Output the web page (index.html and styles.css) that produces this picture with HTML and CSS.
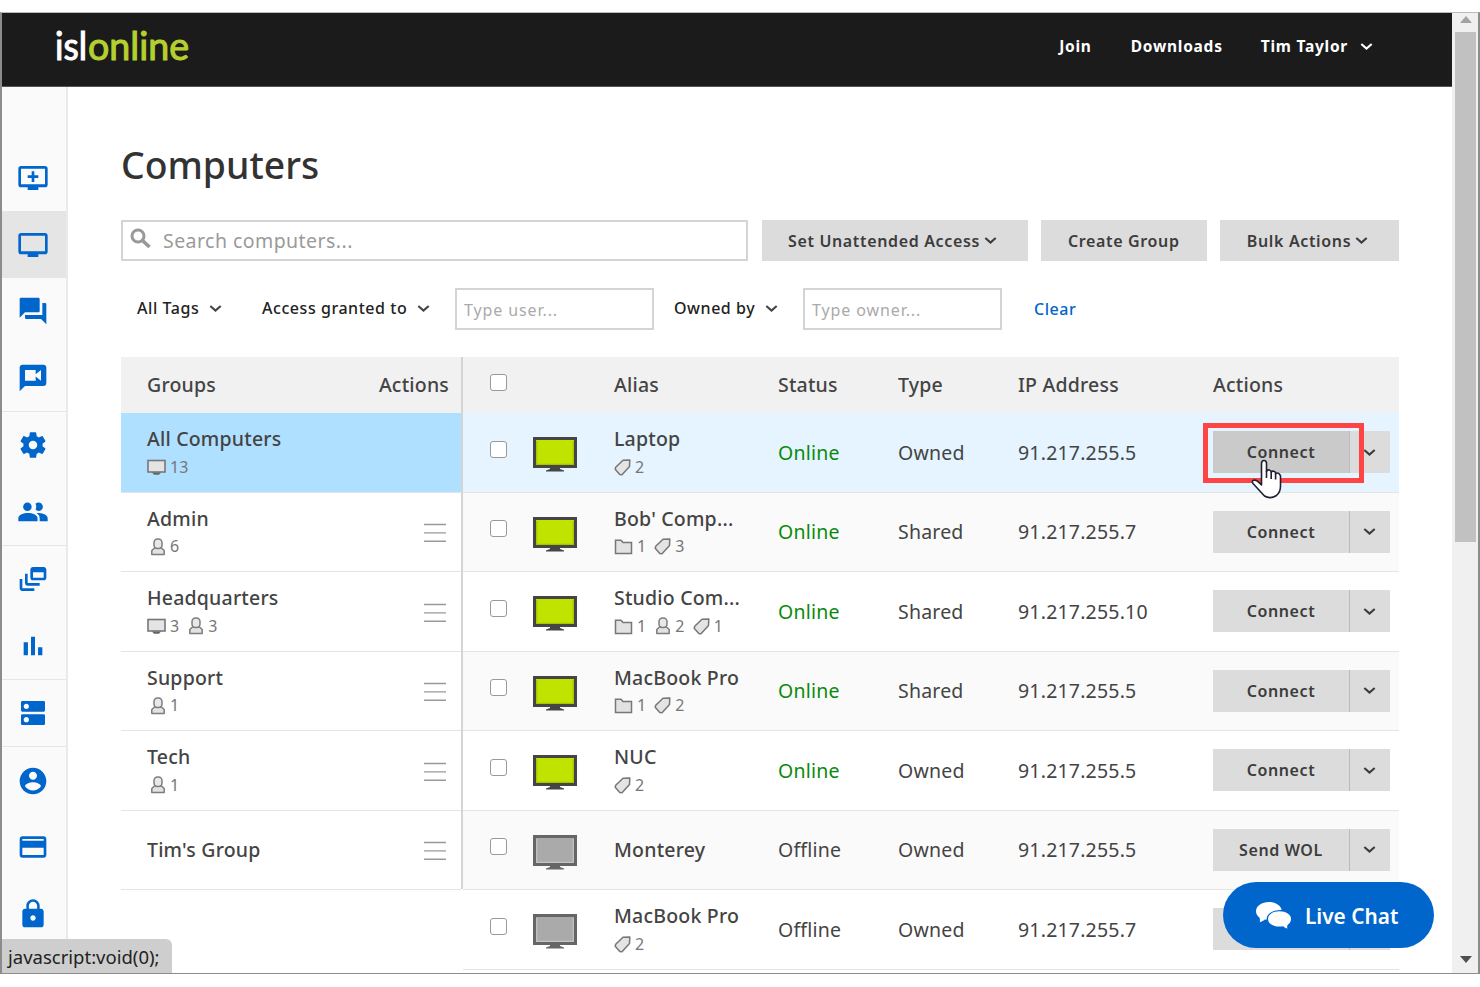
FILE: index.html
```html
<!DOCTYPE html>
<html lang="en">
<head>
<meta charset="utf-8">
<title>Computers</title>
<link rel="stylesheet" href="styles.css">
</head>
<body>
<svg class="defs" width="0" height="0" aria-hidden="true">
  <defs>
    <symbol id="chev" viewBox="0 0 13 9"><path d="M1.3 2 L6.5 6.600 L11.700 2" fill="none" stroke="currentColor" stroke-width="2.100"/></symbol>
    <symbol id="pc" viewBox="0 0 44 36">
      <path d="M17 30h10v2l4 1.600v1H13v-1l4-1.600z" fill="currentColor"/>
      <rect x="0" y="0" width="44" height="31" fill="currentColor"/>
      <rect class="screen" x="3" y="3" width="38" height="25"/>
      <path d="M3.700 4V27.400H40.300V4" fill="none" class="glow" stroke-width="1.200"/>
    </symbol>
    <symbol id="mini-pc" viewBox="0 0 19 16"><rect x="1" y="1.500" width="17" height="11.500" fill="#e4e4e4" stroke="#777" stroke-width="1.600"/><path d="M5 13.500h9l-2 2.300H7z" fill="#666"/></symbol>
    <symbol id="user" viewBox="0 0 16 18"><path d="M4.500 10L1.800 12.500V16.600H14.200V12.500L11.500 10Z" fill="#e2e2e2" stroke="#7d7d7d" stroke-width="1.500" stroke-linejoin="round"/><rect x="4" y="1" width="8" height="9.400" rx="3.500" fill="#e8e8e8" stroke="#7d7d7d" stroke-width="1.500"/></symbol>
    <symbol id="tag" viewBox="0 0 17 17"><path d="M9 1.200L15.800 1 15.500 7.500 8 15.800 5.800 15.600 1.200 10.200 1.700 8.200Z" fill="#e4e4e4" stroke="#777" stroke-width="1.500" stroke-linejoin="round"/></symbol>
    <symbol id="folder" viewBox="0 0 19 17"><path d="M1.500 15.500V2.200H7L9 4.600H17.500V15.500Z" fill="#e2e2e2" stroke="#777" stroke-width="1.500"/></symbol>
    <symbol id="burger" viewBox="0 0 22 20"><path d="M0 1.500H22M0 9.900H22M0 18.200H22" stroke="#999" stroke-width="1.400"/></symbol>
  </defs>
</svg>
<div class="window">
  <div class="main">
    <header class="top">
      <svg class="logo" width="150" height="58" viewBox="0 0 150 58"><text class="isl" x="0" y="47" textLength="32" lengthAdjust="spacingAndGlyphs">isl</text><text class="online" x="33" y="47" textLength="101" lengthAdjust="spacingAndGlyphs">online</text></svg>
      <nav class="links"><a class="l-join">Join</a><a class="l-down">Downloads</a><a class="l-user">Tim Taylor</a><svg class="chev"><use href="#chev"/></svg></nav>
    </header>
    <div class="body">
      <aside class="side">
        <section>
          <a><svg viewBox="0 0 24 24"><path d="M21 3H3c-1.110 0-2 .89-2 2v12c0 1.100.89 2 2 2h5v2h8v-2h5c1.100 0 1.990-.9 1.990-2L23 5c0-1.110-.9-2-2-2zm0 13.600H3V5h18v11.600zm-5-6.600v2h-3v3h-2v-3H8v-2h3V7h2v3h3z"/></svg></a>
          <a class="active"><svg viewBox="0 0 24 24"><path d="M21 3H3c-1.110 0-2 .89-2 2v12c0 1.100.89 2 2 2h5v2h8v-2h5c1.100 0 1.990-.9 1.990-2L23 5c0-1.110-.9-2-2-2zm0 13.600H3V5h18v11.600z"/></svg></a>
          <a><svg viewBox="0 0 24 24"><path d="M21 6h-2v9H6v2c0 .55.45 1 1 1h11l4 4V7c0-.55-.45-1-1-1zm-4 6V3c0-.55-.45-1-1-1H3c-.55 0-1 .45-1 1v14l4-4h10c.55 0 1-.45 1-1z"/></svg></a>
          <a><svg viewBox="0 0 24 24"><path d="M20 2H4c-1.100 0-1.990.9-1.990 2L2 22l4-4h14c1.100 0 2-.9 2-2V4c0-1.100-.9-2-2-2zm-2 12l-4-3.200V14H6V6h8v3.200L18 6v8z"/></svg></a>
        </section>
        <section>
          <a><svg viewBox="0 0 24 24"><path d="M19.140 12.940c.04-.3.060-.61.060-.94 0-.32-.02-.64-.07-.94l2.030-1.580c.18-.14.230-.41.120-.61l-1.920-3.320c-.12-.22-.37-.29-.59-.22l-2.390.96c-.5-.38-1.030-.7-1.620-.94l-.36-2.540c-.04-.24-.24-.41-.48-.41h-3.840c-.24 0-.43.170-.47.410l-.36 2.540c-.59.240-1.130.570-1.620.940l-2.390-.96c-.22-.08-.47 0-.59.220L2.740 8.870c-.12.210-.08.470.120.610l2.030 1.580c-.05.300-.09.630-.09.940s.02.640.070.940l-2.030 1.580c-.18.140-.23.410-.12.610l1.920 3.320c.12.220.370.290.590.220l2.390-.96c.5.380 1.030.7 1.620.94l.36 2.540c.05.240.240.410.480.410h3.840c.24 0 .44-.17.470-.41l.36-2.540c.59-.24 1.130-.56 1.620-.94l2.390.96c.22.080.470 0 .59-.22l1.920-3.320c.12-.22.070-.47-.12-.61l-2.010-1.580zM12 15.200c-1.770 0-3.200-1.430-3.200-3.200s1.430-3.200 3.200-3.200 3.200 1.430 3.200 3.200-1.430 3.200-3.200 3.200z"/></svg></a>
          <a><svg viewBox="0 0 24 24"><path d="M7.800 11.200a3.200 3.200 0 1 0 0-6.400 3.200 3.200 0 0 0 0 6.400zM16.200 11.200a3.200 3.200 0 1 0 0-6.400 3.200 3.200 0 0 0-2.300 1c.7 1.300.7 3.100 0 4.400a3.200 3.200 0 0 0 2.300 1zM1 19v-2.300c0-2.500 4-3.900 7.200-3.900s7.200 1.400 7.200 3.900V19zM17 19h6v-2.300c0-2.300-3.300-3.700-6.300-3.900-.9 0-1.600.1-2 .2 1.600.9 2.300 2.100 2.300 3.700z"/></svg></a>
        </section>
        <section>
          <a><svg viewBox="0 0 24 24"><path d="M8 8H6v7c0 1.100.89 2 2 2h9v-2H8V8zM20 3h-8c-1.100 0-2 .9-2 2v6c0 1.100.9 2 2 2h8c1.100 0 2-.9 2-2V5c0-1.100-.9-2-2-2zm0 8h-8V7h8v4zM4 12H2v7c0 1.100.89 2 2 2h9v-2H4v-7z"/></svg></a>
          <a><svg viewBox="0 0 24 24"><path d="M5 9.200h3.200V19H5zM10.500 5h3v14h-3zM15.800 13H19v6h-3.200z"/></svg></a>
        </section>
        <section>
          <a><svg viewBox="0 0 24 24"><path d="M20 13H4c-.55 0-1 .45-1 1v6c0 .55.45 1 1 1h16c.55 0 1-.45 1-1v-6c0-.55-.45-1-1-1zM7 19c-1.100 0-2-.9-2-2s.9-2 2-2 2 .9 2 2-.9 2-2 2zM20 3H4c-.55 0-1 .45-1 1v6c0 .55.45 1 1 1h16c.55 0 1-.45 1-1V4c0-.55-.45-1-1-1zM7 9c-1.100 0-2-.9-2-2s.9-2 2-2 2 .9 2 2-.9 2-2 2z"/></svg></a>
        </section>
        <section>
          <a><svg viewBox="0 0 24 24"><path d="M12 2C6.480 2 2 6.480 2 12s4.480 10 10 10 10-4.480 10-10S17.520 2 12 2zm0 3c1.660 0 3 1.340 3 3s-1.340 3-3 3-3-1.340-3-3 1.340-3 3-3zm0 14.200c-2.500 0-4.710-1.280-6-3.220.03-1.990 4-3.080 6-3.080 1.990 0 5.970 1.090 6 3.080-1.290 1.940-3.500 3.220-6 3.220z"/></svg></a>
          <a><svg viewBox="0 0 24 24"><path d="M20 4H4c-1.110 0-1.990.89-1.990 2L2 18c0 1.110.89 2 2 2h16c1.110 0 2-.89 2-2V6c0-1.110-.89-2-2-2zm0 14H4v-5.500h16V18zm0-10.600H4V6h16v1.400z"/></svg></a>
          <a><svg viewBox="0 0 24 24"><path d="M18 8h-1V6c0-2.760-2.240-5-5-5S7 3.240 7 6v2H6c-1.100 0-2 .9-2 2v10c0 1.100.9 2 2 2h12c1.100 0 2-.9 2-2V10c0-1.100-.9-2-2-2zm-6 9c-1.100 0-2-.9-2-2s.9-2 2-2 2 .9 2 2-.9 2-2 2zm3.100-9H8.900V6c0-1.710 1.390-3.100 3.100-3.100 1.710 0 3.100 1.390 3.100 3.100v2z"/></svg></a>
        </section>
      </aside>
      <main class="content">
        <h1>Computers</h1>
        <div class="toolbar">
          <div class="search"><svg width="22" height="22" viewBox="0 0 22 22"><circle cx="8" cy="8" r="6" fill="none" stroke="#999" stroke-width="3"/><path d="M12.500 12.500L19.500 19" stroke="#999" stroke-width="3.600"/></svg><span>Search computers...</span></div>
          <div class="btn b1">Set Unattended Access<svg class="chev"><use href="#chev"/></svg></div>
          <div class="btn b2">Create Group</div>
          <div class="btn b3">Bulk Actions<svg class="chev"><use href="#chev"/></svg></div>
        </div>
        <div class="filters">
          <div class="f f1">All Tags<svg class="chev"><use href="#chev"/></svg></div>
          <div class="f f2">Access granted to<svg class="chev"><use href="#chev"/></svg></div>
          <div class="input">Type user...</div>
          <div class="f f3">Owned by<svg class="chev"><use href="#chev"/></svg></div>
          <div class="input">Type owner...</div>
          <a class="clear">Clear</a>
        </div>
        <div class="tables">
          <div class="groups">
            <div class="ghead"><span>Groups</span><span>Actions</span></div>
            <div class="grow sel"><div><p>All Computers</p><p class="meta"><svg class="i-pc"><use href="#mini-pc"/></svg><b>13</b></p></div></div>
            <div class="grow"><div><p>Admin</p><p class="meta"><svg class="i-user first"><use href="#user"/></svg><b>6</b></p></div><svg class="burger"><use href="#burger"/></svg></div>
            <div class="grow"><div><p>Headquarters</p><p class="meta"><svg class="i-pc"><use href="#mini-pc"/></svg><b>3</b><svg class="i-user"><use href="#user"/></svg><b>3</b></p></div><svg class="burger"><use href="#burger"/></svg></div>
            <div class="grow"><div><p>Support</p><p class="meta"><svg class="i-user first"><use href="#user"/></svg><b>1</b></p></div><svg class="burger"><use href="#burger"/></svg></div>
            <div class="grow"><div><p>Tech</p><p class="meta"><svg class="i-user first"><use href="#user"/></svg><b>1</b></p></div><svg class="burger"><use href="#burger"/></svg></div>
            <div class="grow"><div><p>Tim's Group</p></div><svg class="burger"><use href="#burger"/></svg></div>
          </div>
          <div class="comps">
            <div class="chead"><i class="cb"></i><span></span><span>Alias</span><span>Status</span><span>Type</span><span>IP Address</span><span>Actions</span></div>
            <div class="crow hov"><i class="cb"></i><svg class="pc on"><use href="#pc"/></svg><div><p>Laptop</p><p class="meta"><svg class="i-tag"><use href="#tag"/></svg><b>2</b></p></div><span class="ok">Online</span><span>Owned</span><span>91.217.255.5</span><div class="act"><span>Connect</span><span><svg class="chev"><use href="#chev"/></svg></span></div></div>
            <div class="crow alt"><i class="cb"></i><svg class="pc on"><use href="#pc"/></svg><div><p>Bob' Comp...</p><p class="meta"><svg class="i-folder"><use href="#folder"/></svg><b>1</b><svg class="i-tag"><use href="#tag"/></svg><b>3</b></p></div><span class="ok">Online</span><span>Shared</span><span>91.217.255.7</span><div class="act"><span>Connect</span><span><svg class="chev"><use href="#chev"/></svg></span></div></div>
            <div class="crow"><i class="cb"></i><svg class="pc on"><use href="#pc"/></svg><div><p>Studio Com...</p><p class="meta"><svg class="i-folder"><use href="#folder"/></svg><b>1</b><svg class="i-user"><use href="#user"/></svg><b>2</b><svg class="i-tag"><use href="#tag"/></svg><b>1</b></p></div><span class="ok">Online</span><span>Shared</span><span>91.217.255.10</span><div class="act"><span>Connect</span><span><svg class="chev"><use href="#chev"/></svg></span></div></div>
            <div class="crow alt"><i class="cb"></i><svg class="pc on"><use href="#pc"/></svg><div><p>MacBook Pro</p><p class="meta"><svg class="i-folder"><use href="#folder"/></svg><b>1</b><svg class="i-tag"><use href="#tag"/></svg><b>2</b></p></div><span class="ok">Online</span><span>Shared</span><span>91.217.255.5</span><div class="act"><span>Connect</span><span><svg class="chev"><use href="#chev"/></svg></span></div></div>
            <div class="crow"><i class="cb"></i><svg class="pc on"><use href="#pc"/></svg><div><p>NUC</p><p class="meta"><svg class="i-tag"><use href="#tag"/></svg><b>2</b></p></div><span class="ok">Online</span><span>Owned</span><span>91.217.255.5</span><div class="act"><span>Connect</span><span><svg class="chev"><use href="#chev"/></svg></span></div></div>
            <div class="crow alt"><i class="cb"></i><svg class="pc off"><use href="#pc"/></svg><div><p>Monterey</p></div><span>Offline</span><span>Owned</span><span>91.217.255.5</span><div class="act"><span>Send WOL</span><span><svg class="chev"><use href="#chev"/></svg></span></div></div>
            <div class="crow"><i class="cb"></i><svg class="pc off"><use href="#pc"/></svg><div><p>MacBook Pro</p><p class="meta"><svg class="i-tag"><use href="#tag"/></svg><b>2</b></p></div><span>Offline</span><span>Owned</span><span>91.217.255.7</span><div class="act"><span></span><span></span></div></div>
          </div>
        </div>
      </main>
    </div>
  </div>
  <div class="scroll">
    <svg width="12" height="7" viewBox="0 0 12 7"><path d="M0 7L6 0 12 7z" fill="#a3a3a3"/></svg>
    <div class="thumb"></div>
    <svg class="down" width="12" height="7" viewBox="0 0 12 7"><path d="M0 0L6 7 12 0z" fill="#505050"/></svg>
  </div>
</div>
<div class="marker"></div>
<svg class="cursor" width="32" height="40" viewBox="0 0 32 40"><path d="M11.500 23V4.500Q11.500 1.500 14 1.500T16.500 4.500V12.500Q17 10.500 19.200 11T21.200 13.500Q21.700 11.800 23.800 12.300T25.600 14.800Q26.500 13.500 28.200 14.200T30.500 17V27Q30.500 33 26.500 36.500Q20 40.500 14.500 37L3 24.500Q1.500 22 3.500 21.200Q5.500 20.700 7.500 22.200L11.500 26Z" fill="#fff" stroke="#1f1f33" stroke-width="1.600" stroke-linejoin="round"/><path d="M16.500 12V19M21.200 13.500V20M25.600 15V20.500" stroke="#1f1f33" stroke-width="1.600"/></svg>
<div class="chat"><svg width="35" height="27" viewBox="0 0 35 27"><path d="M13 0C5.800 0 0 4 0 9.300c0 2.700 1.500 5 3.800 6.800 0 1.500.3 2.800 0 4.200 2-.7 3.500-1.500 5-2.800l1.700.3C10.500 12 16.500 7.800 25.700 8 24.500 3.200 19.300 0 13 0z"/><path d="M23.500 9.300C17 9.300 12 12.500 12 17s5 7.600 11.500 7.600c1.300 0 2.500-.1 3.600-.4 1.400 1.200 2.600 1.900 4.300 2.300-.4-1.200-.3-2.300.1-3.600 2.200-1.400 3.500-3.300 3.500-5.900 0-4.500-5-7.700-11.500-7.700z"/></svg><span>Live Chat</span></div>
<div class="status">javascript:void(0);</div>
</body>
</html>
```
FILE: styles.css
```css
* { box-sizing: border-box; }
body { margin: 0; padding-top: 12px; height: 987px; overflow: hidden; background: #fff; position: relative; font-family: "Noto Sans", "Open Sans", sans-serif; font-size: 19.500px; color: #444; }
p, h1 { margin: 0; }
.defs { display: block; position: absolute; }
.window { display: flex; height: 962px; border: solid #8c8c8c; border-width: 1px 2px 1px 1px; border-top-color: #bbb; border-left: 2px solid #8c8c8c; }
.main { flex: 1; min-width: 0; display: flex; flex-direction: column; overflow: hidden; }
.top { height: 74px; flex: none; background: #1b1b1b; border-bottom: 1px solid #555; display: flex; justify-content: space-between; padding: 0 79px 0 53px; }
.logo { font-family: Lato, sans-serif; font-size: 39px; stroke-width: 1.100px; }
.isl { fill: #fff; stroke: #fff; }
.online { fill: #b5cf2f; stroke: #b5cf2f; }
.links { display: flex; align-items: center; height: 66px; color: #fff; font-size: 15.500px; font-weight: 700; letter-spacing: .75px; line-height: 22px; }
.l-down { margin-left: 39px; }
.l-user { margin-left: 38px; }
.chev { width: 13px; height: 9px; flex: none; display: block; }
.links .chev { margin-left: 12px; }
.body { flex: 1; display: flex; min-height: 0; }
.side { width: 66px; background: #fafafa; border-right: 2px solid #eaeaea; padding-top: 57.500px; flex: none; }
.side section { border-bottom: 1.500px solid #e6e6e6; }
.side section:last-child { border: 0; }
.side a { display: flex; height: 66.500px; align-items: center; justify-content: center; padding: 1px 2px 0 0; }
.side a.active { background: #e5e5e5; }
.side svg { width: 32px; height: 32px; fill: #06c; }
.content { padding: 51px 0 0 53px; width: 1331px; flex: none; }
h1 { font-size: 37.330px; font-weight: 500; line-height: 54px; letter-spacing: 0; color: #333; }
.toolbar { display: flex; margin-top: 28px; gap: 13.500px; height: 41px; }
.search { width: 627px; border: 2px solid #d4d4d4; display: flex; align-items: center; color: #9a9a9a; padding: 0 0 1px 7px; letter-spacing: .45px; }
.search svg { margin: -2px 11px 0 0; }
.btn { background: #dcdcdc; display: flex; align-items: center; justify-content: center; font-size: 16px; font-weight: 600; color: #3c3c3c; letter-spacing: .65px; }
.b1, .b3 { padding-right: 4px; }
.btn .chev { margin-left: 4px; }
.b1 { width: 266px; } .b2 { width: 165.500px; } .b3 { width: 179px; }
.filters { display: flex; margin-top: 27px; height: 42px; font-size: 16px; letter-spacing: .55px; }
.f { display: flex; align-items: center; height: 40px; font-weight: 550; color: #222; }
.f .chev { margin-left: 10px; color: #444; }
.f1 { width: 125px; margin-left: 16px; }
.f2 { width: 193px; }
.f3 { width: 129px; margin: 0 0 0 20px; }
.input { width: 199px; border: 2px solid #d4d4d4; color: #aaa; padding: 0 0 0 7px; line-height: 40px; height: 42px; letter-spacing: .9px; }
.clear { color: #06c; margin-left: 32px; line-height: 43px; font-weight: 500; }
.tables { display: flex; margin-top: 27px; letter-spacing: .2px; }
.groups { width: 342px; height: 532px; border-right: 2px solid #d4d4d4; }
.comps { flex: 1; }
.ghead, .chead { height: 56px; background: #f1f1f1; font-weight: 500; }
.ghead { display: flex; justify-content: space-between; align-items: center; padding: 0 12px 2px 26px; }
.chead, .crow { display: grid; grid-template-columns: 69px 82px 164px 120px 120px 195px 186px; align-items: center; }
.chead { padding-bottom: 2px; }
.chead .cb { margin-top: -3px; }
.grow { height: 79.500px; border-bottom: 1.500px solid #e4e4e4; display: flex; align-items: center; justify-content: space-between; padding: 0 15px 0 26px; }
.crow { height: 79.500px; border-bottom: 1.500px solid #e4e4e4; }
.grow p, .crow p { font-weight: 550; line-height: 27px; white-space: nowrap; }
.crow.alt { background: #fafafa; }
.crow.hov { background: #e5f4ff; }
.grow.sel { background: #b0e0ff; }
.grow .meta, .crow .meta { display: flex; align-items: center; font-size: 16px; font-weight: 400; color: #777; margin: 1.500px 0 -1.500px; }
.meta b { font-weight: 400; margin: 0 8px 0 4px; }
.i-pc { width: 19px; height: 16px; }
.i-user { width: 16px; height: 18px; margin-left: 1px; }
.i-user.first { margin-left: 3px; }
.i-tag { width: 17px; height: 17px; }
.i-folder { width: 19px; height: 17px; }
.burger { width: 22px; height: 20px; margin-top: 3px; }
.cb { width: 17px; height: 17px; border: 1.500px solid #999; border-radius: 3px; background: #fff; margin: -6px 0 0 27px; }
.pc { width: 44px; height: 36px; margin: 6px 0 0 1px; }
.pc.on { color: #454545; } .on { --s: #c0e300; --g: #a6c400; }
.pc.off { color: #666; } .off { --s: #aaa; --g: #c4c4c4; }
.screen { fill: var(--s); } .glow { stroke: var(--g); }
.ok { color: #0a8a0a; }
.act { display: flex; width: 177px; height: 42px; background: #dcdcdc; font-size: 16px; font-weight: 600; letter-spacing: .6px; color: #3c3c3c; }
.act span:first-child { width: 137px; border-right: 1.500px solid #bbb; display: flex; align-items: center; justify-content: center; }
.act span:last-child { flex: 1; display: flex; align-items: center; justify-content: center; padding-right: 2px; }
.hov .act span:first-child { background: #cacaca; }
.scroll { width: 26px; background: #f0f0f0; display: flex; flex-direction: column; align-items: center; padding: 3px 0 10px 1px; }
.thumb { width: 21px; height: 510px; background: #c1c1c1; margin-top: 9px; }
.down { margin-top: auto; }
.marker { position: absolute; left: 1203px; top: 423px; width: 161px; height: 60px; border: 5px solid #ff4444; }
.cursor { position: absolute; left: 1250px; top: 459px; }
.chat { position: absolute; left: 1223px; top: 882px; width: 211px; height: 66px; border-radius: 33px; background: #06c; color: #fff; display: flex; align-items: center; padding: 1px 0 0 33px; font-size: 20.800px; font-weight: 600; letter-spacing: 0; }
.chat svg { fill: #fff; margin-right: 14px; }
.status { position: absolute; left: 2px; top: 939px; width: 170px; height: 34px; background: #cecece; border-radius: 0 6px 0 0; font-size: 18.500px; line-height: 36px; padding-left: 6px; color: #222; white-space: nowrap; }
```
